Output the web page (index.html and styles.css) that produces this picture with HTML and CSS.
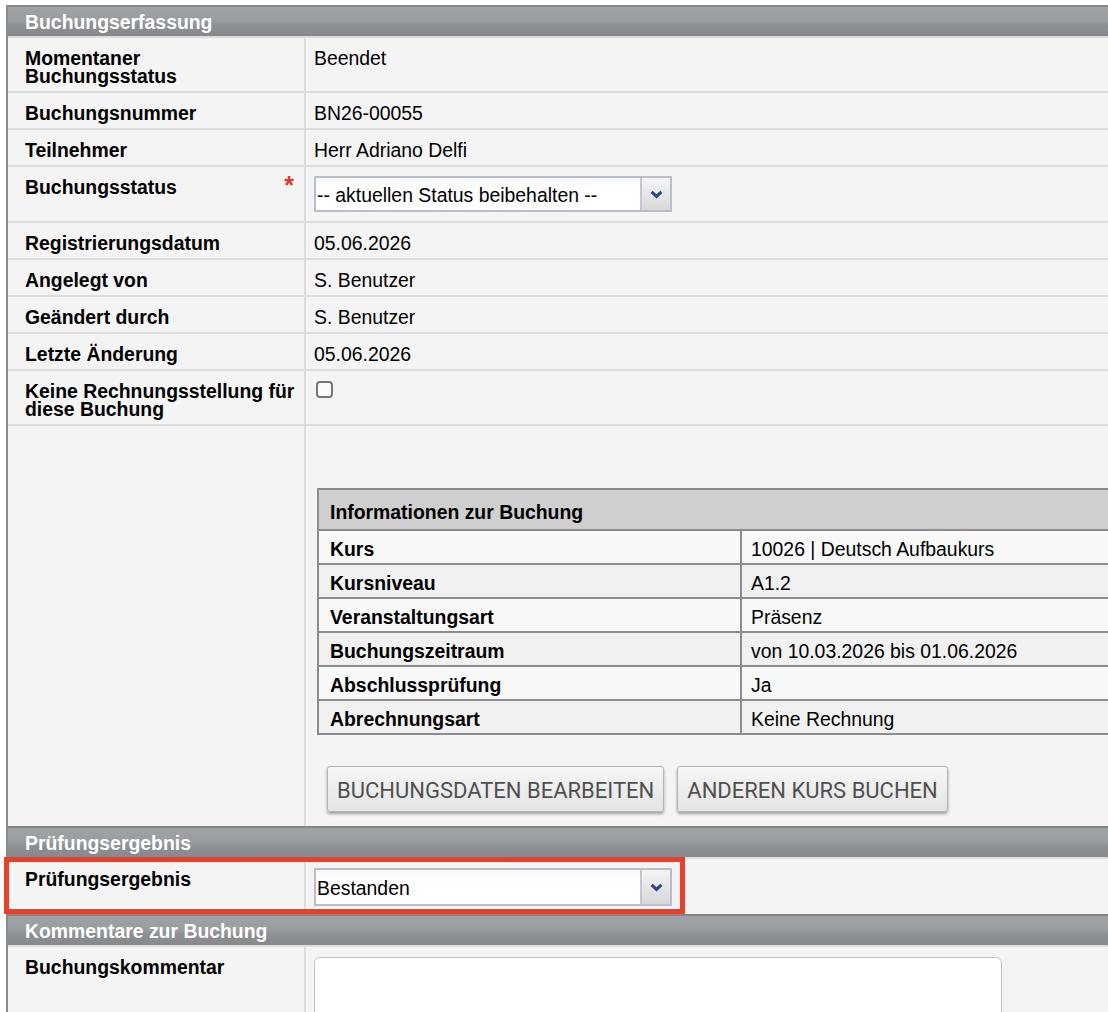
FILE: index.html
```html
<!DOCTYPE html>
<html lang="de">
<head>
<meta charset="utf-8">
<title>Buchungserfassung</title>
<link rel="stylesheet" href="styles.css">
</head>
<body>
<div class="form">
  <div class="section-head">Buchungserfassung</div>

  <div class="row">
    <div class="label">Momentaner<br>Buchungsstatus</div>
    <div class="value">Beendet</div>
  </div>
  <div class="row">
    <div class="label">Buchungsnummer</div>
    <div class="value">BN26-00055</div>
  </div>
  <div class="row">
    <div class="label">Teilnehmer</div>
    <div class="value">Herr Adriano Delfi</div>
  </div>
  <div class="row">
    <div class="label"><span>Buchungsstatus</span><span class="req">*</span></div>
    <div class="value">
      <div class="select">
        <span class="select-text">-- aktuellen Status beibehalten --</span>
        <span class="select-arrow"><svg width="13" height="9" viewBox="0 0 13 9"><path d="M1.6 1.8 L6.5 6.4 L11.4 1.8" fill="none" stroke="#2c4683" stroke-width="3"/></svg></span>
      </div>
    </div>
  </div>
  <div class="row">
    <div class="label">Registrierungsdatum</div>
    <div class="value">05.06.2026</div>
  </div>
  <div class="row">
    <div class="label">Angelegt von</div>
    <div class="value">S. Benutzer</div>
  </div>
  <div class="row">
    <div class="label">Geändert durch</div>
    <div class="value">S. Benutzer</div>
  </div>
  <div class="row">
    <div class="label">Letzte Änderung</div>
    <div class="value">05.06.2026</div>
  </div>
  <div class="row">
    <div class="label">Keine Rechnungsstellung für<br>diese Buchung</div>
    <div class="value"><input type="checkbox" class="check"></div>
  </div>
  <div class="row">
    <div class="label"></div>
    <div class="value">
      <table class="info">
        <colgroup><col class="info-c1"><col></colgroup>
        <tr><th colspan="2">Informationen zur Buchung</th></tr>
        <tr class="odd"><td class="k">Kurs</td><td>10026 | Deutsch Aufbaukurs</td></tr>
        <tr class="even"><td class="k">Kursniveau</td><td>A1.2</td></tr>
        <tr class="odd"><td class="k">Veranstaltungsart</td><td>Präsenz</td></tr>
        <tr class="even"><td class="k">Buchungszeitraum</td><td>von 10.03.2026 bis 01.06.2026</td></tr>
        <tr class="odd"><td class="k">Abschlussprüfung</td><td>Ja</td></tr>
        <tr class="even"><td class="k">Abrechnungsart</td><td>Keine Rechnung</td></tr>
      </table>
      <div class="buttons">
        <button class="btn">BUCHUNGSDATEN BEARBEITEN</button>
        <button class="btn">ANDEREN KURS BUCHEN</button>
      </div>
    </div>
  </div>

  <div class="section-head">Prüfungsergebnis</div>
  <div class="row row-marked">
    <div class="label">Prüfungsergebnis</div>
    <div class="value">
      <div class="select select-tall">
        <span class="select-text">Bestanden</span>
        <span class="select-arrow"><svg width="13" height="9" viewBox="0 0 13 9"><path d="M1.6 1.8 L6.5 6.4 L11.4 1.8" fill="none" stroke="#2c4683" stroke-width="3"/></svg></span>
      </div>
    </div>
    <div class="highlight"></div>
  </div>

  <div class="section-head">Kommentare zur Buchung</div>
  <div class="row">
    <div class="label">Buchungskommentar</div>
    <div class="value"><textarea class="comment"></textarea></div>
  </div>
</div>
</body>
</html>
```

FILE: styles.css
```css
html, body {
  margin: 0;
  padding: 0;
  background: #ffffff;
  overflow: hidden;
}

body {
  font-family: "Liberation Sans", Arial, Helvetica, sans-serif;
  font-size: 19.4px;
  line-height: 18px;
  color: #000;
}

.form {
  margin: 5px 0 0 6px;
  width: 1140px;
  border-left: 2px solid #8b8b8b;
  background: #f4f4f4;
}

.section-head {
  border-top: 2px solid #858585;
  height: 29px;
  line-height: 30px;
  padding-left: 17px;
  color: #ffffff;
  font-weight: bold;
  background: linear-gradient(#a0a3a6 0%, #9a9da0 48%, #8d9093 62%, #87898c 100%);
}

.row {
  position: relative;
  display: grid;
  grid-template-columns: 298px 1fr;
  border-top: 2px solid #dcdcdc;
}

.label {
  display: flex;
  justify-content: space-between;
  align-items: flex-start;
  padding: 11px 10px 6px 17px;
  font-weight: bold;
  white-space: nowrap;
  border-right: 2px solid #dcdcdc;
}

.req {
  color: #e03a2f;
  font-weight: bold;
  font-size: 25px;
  line-height: 20px;
  margin-top: -3px;
}

.value {
  padding: 11px 8px 6px 8px;
}

.select {
  display: flex;
  box-sizing: border-box;
  width: 358px;
  height: 36px;
  margin: -2px 0 3px 0;
  border: 2px solid #b9bdcc;
  background: linear-gradient(#f7f9f9, #ffffff 40%);
}

.select-tall {
  height: 38px;
  margin: -2px 0 2px 0;
}

.select-text {
  flex: 1;
  display: flex;
  align-items: center;
  padding: 2px 0 0 1px;
  white-space: nowrap;
}

.select-arrow {
  width: 28px;
  display: flex;
  align-items: center;
  justify-content: center;
  border-left: 2px solid #c4c7d3;
  background: linear-gradient(#f4f4f4, #d8d8d8);
}

.check {
  -webkit-appearance: none;
  appearance: none;
  display: block;
  width: 17px;
  height: 17px;
  margin: -1px 0 0 2px;
  box-sizing: border-box;
  border: 2px solid #767676;
  border-radius: 4px;
  background: #fbfbfb;
}

.info {
  margin: 51px 0 0 3px;
  width: 820px;
  table-layout: fixed;
  border-collapse: collapse;
  border: 2px solid #8c8c8c;
  font-size: 19.4px;
  line-height: 18px;
}

.info-c1 {
  width: 423px;
}

.info th {
  text-align: left;
  padding: 13px 10px 8px 11px;
  background: #cfcfcf;
  border: 2px solid #8c8c8c;
}

.info td {
  padding: 9px 10px 5px 9px;
  border: 2px solid #8c8c8c;
  white-space: nowrap;
}

.info td.k {
  font-weight: bold;
  padding-left: 11px;
}

.info tr.odd td {
  background: #f8f8f8;
}

.info tr.even td {
  background: #f1f1f1;
}

.buttons {
  display: flex;
  gap: 13px;
  margin: 31px 0 8px 13px;
}

.btn {
  box-sizing: border-box;
  height: 46px;
  padding: 2px 9px 0;
  font-family: Roboto, "Liberation Sans", Arial, sans-serif;
  font-size: 22px;
  color: #505050;
  border: 1px solid #b4b4b4;
  border-radius: 3px;
  background: linear-gradient(#f6f6f6, #e4e4e4);
  box-shadow: 0 2px 3px rgba(0, 0, 0, 0.35);
}

.highlight {
  position: absolute;
  left: -4px;
  top: -2px;
  width: 681px;
  height: 57px;
  box-sizing: border-box;
  border: 5px solid #e8412b;
  pointer-events: none;
}

.comment {
  display: block;
  box-sizing: border-box;
  width: 688px;
  height: 110px;
  margin: -1px 0 0 0;
  border: 1px solid #c4c4c4;
  border-radius: 6px;
  background: #ffffff;
  resize: none;
}
```
